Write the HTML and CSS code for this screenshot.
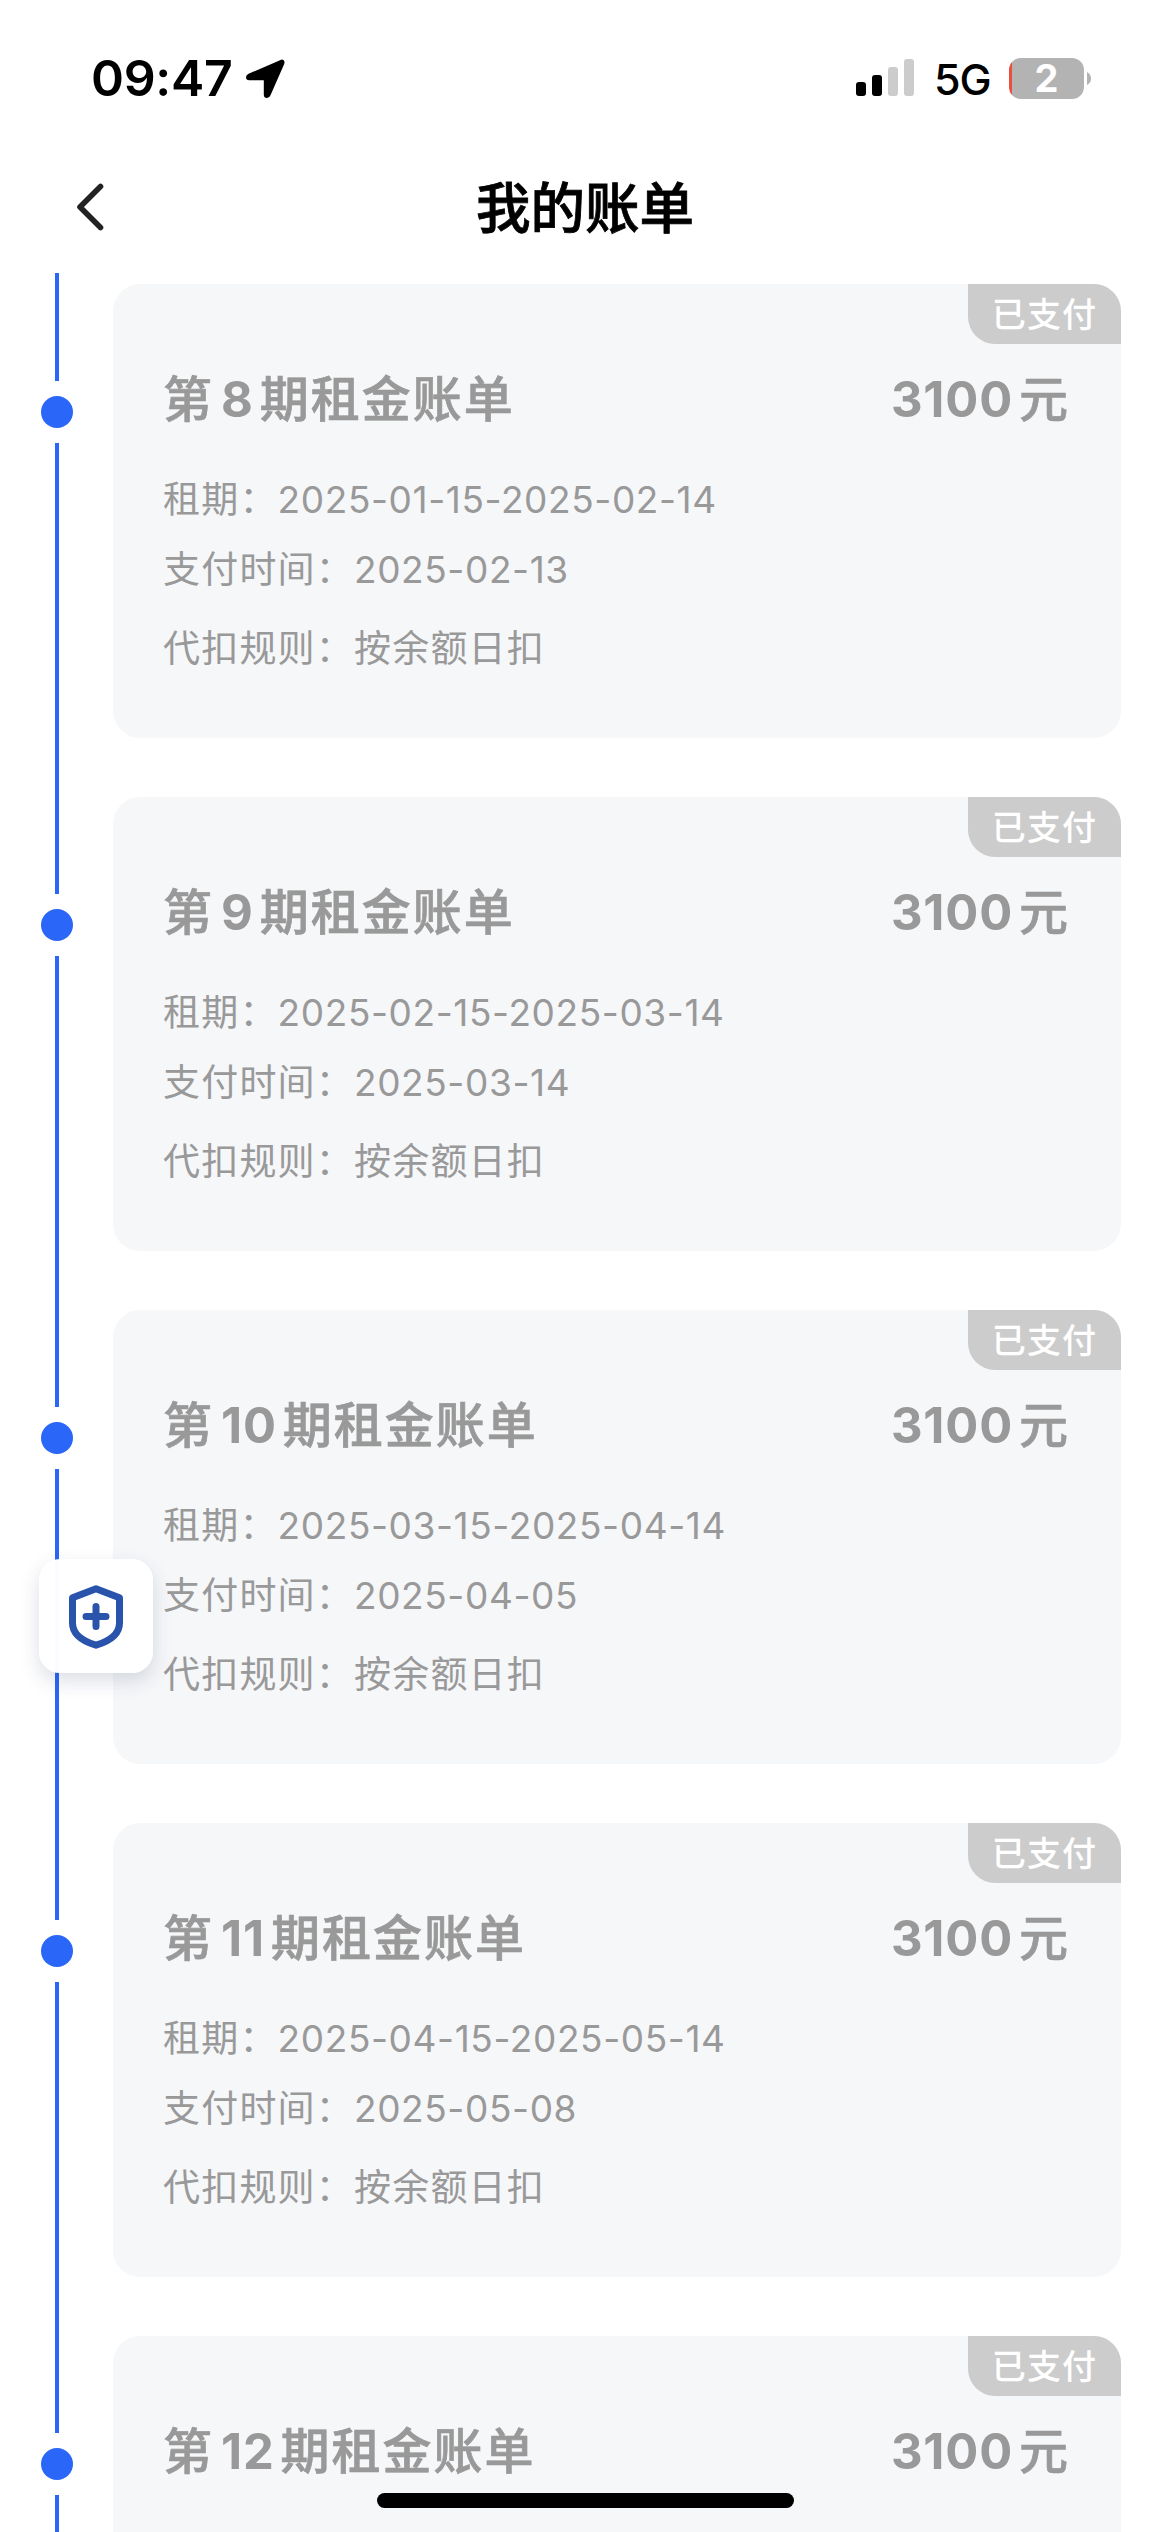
FILE: index.html
```html
<!DOCTYPE html>
<html lang="zh-CN">
<head>
    <meta charset="UTF-8">
    <meta name="viewport" content="width=device-width, initial-scale=1.0">
    <title>我的账单</title>
    <link rel="stylesheet" href="styles.css">
</head>
<body>
    <div class="status-bar">
        <span class="time">09:47</span>
        <svg class="location" width="39" height="39" viewBox="0 0 39 39">
            <path d="M34 1.2Q36.2 0 37.7 1.3Q39 2.6 38.2 5L24.5 36.2Q23.3 39 21 39Q17.8 39 17.8 35.5V21.2H3.3Q0 21.2 0 18.2Q0 16 2.6 14.8Z"/>
        </svg>
        <svg class="signal" width="58" height="38" viewBox="0 0 58 38">
            <rect x="0" y="23" width="10" height="14" rx="3"/>
            <rect x="16" y="16" width="10" height="21" rx="3"/>
            <rect x="32" y="8" width="10" height="29" rx="3" fill="#ccc"/>
            <rect x="48" y="0" width="10" height="37" rx="3" fill="#ccc"/>
        </svg>
        <span class="network">5G</span>
        <div class="battery">2</div>
        <svg class="battery-cap" width="4" height="13" viewBox="0 0 4 13">
            <path d="M0 0Q4 2 4 6.5Q4 11 0 13Z" fill="#b3b3b3"/>
        </svg>
    </div>

    <div class="navbar">
        <svg class="back" width="28" height="48" viewBox="0 0 28 48">
            <path d="M24.5 3.5L4 24L24.5 44.5" fill="none" stroke="#222" stroke-width="5.6" stroke-linecap="round" stroke-linejoin="round"/>
        </svg>
        <h1>我的账单</h1>
    </div>

    <div class="bill-list">
        <div class="bill">
            <div class="rail"><i class="line-top"></i><i class="dot"></i><i class="line-bottom"></i></div>
            <div class="card">
                <span class="badge">已支付</span>
                <div class="card-head">
                    <h2>第<b>8</b>期租金账单</h2>
                    <p class="amount"><b>3100</b>元</p>
                </div>
                <p>租期：<span>2025-01-15-2025-02-14</span></p>
                <p>支付时间：<span>2025-02-13</span></p>
                <p class="rule">代扣规则：按余额日扣</p>
            </div>
        </div>
        <div class="bill">
            <div class="rail"><i class="line-top"></i><i class="dot"></i><i class="line-bottom"></i></div>
            <div class="card">
                <span class="badge">已支付</span>
                <div class="card-head">
                    <h2>第<b>9</b>期租金账单</h2>
                    <p class="amount"><b>3100</b>元</p>
                </div>
                <p>租期：<span>2025-02-15-2025-03-14</span></p>
                <p>支付时间：<span>2025-03-14</span></p>
                <p class="rule">代扣规则：按余额日扣</p>
            </div>
        </div>
        <div class="bill">
            <div class="rail"><i class="line-top"></i><i class="dot"></i><i class="line-bottom"></i></div>
            <div class="card">
                <span class="badge">已支付</span>
                <div class="card-head">
                    <h2>第<b>10</b>期租金账单</h2>
                    <p class="amount"><b>3100</b>元</p>
                </div>
                <p>租期：<span>2025-03-15-2025-04-14</span></p>
                <p>支付时间：<span>2025-04-05</span></p>
                <p class="rule">代扣规则：按余额日扣</p>
            </div>
        </div>
        <div class="bill">
            <div class="rail"><i class="line-top"></i><i class="dot"></i><i class="line-bottom"></i></div>
            <div class="card">
                <span class="badge">已支付</span>
                <div class="card-head">
                    <h2>第<b>11</b>期租金账单</h2>
                    <p class="amount"><b>3100</b>元</p>
                </div>
                <p>租期：<span>2025-04-15-2025-05-14</span></p>
                <p>支付时间：<span>2025-05-08</span></p>
                <p class="rule">代扣规则：按余额日扣</p>
            </div>
        </div>
        <div class="bill">
            <div class="rail"><i class="line-top"></i><i class="dot"></i><i class="line-bottom"></i></div>
            <div class="card">
                <span class="badge">已支付</span>
                <div class="card-head">
                    <h2>第<b>12</b>期租金账单</h2>
                    <p class="amount"><b>3100</b>元</p>
                </div>
            </div>
        </div>
    </div>

    <div class="shield-button">
        <svg width="54" height="64" viewBox="0 0 54 64" fill="none" stroke="#2a54ab" stroke-width="7" stroke-linecap="round" stroke-linejoin="round">
            <path d="M27 3.8L50.5 12.7V38C50.5 49 41 56 27 60.2C13 56 3.5 49 3.5 38V12.7Z"/>
            <path d="M17 31.5H37M27 21.5V41.5"/>
        </svg>
    </div>
    <div class="home-indicator"></div>
</body>
</html>
```
FILE: styles.css
```css
* {
    box-sizing: border-box;
    margin: 0;
    padding: 0;
}
body {
    display: flex;
    flex-direction: column;
    height: 2532px;
    overflow: hidden;
    background-color: #fff;
    font-family: Inter, "Noto Sans CJK SC", sans-serif;
}
svg {
    display: block;
    flex: none;
}
.status-bar {
    display: flex;
    align-items: center;
    height: 141px;
    padding: 15px 79px 0 91px;
}
.time {
    width: 155px;
    font-size: 50px;
    font-weight: 600;
    letter-spacing: -0.3px;
}
.signal {
    margin-left: auto;
}
.network {
    width: 75px;
    margin: 2px 0 0 20px;
    font-size: 43px;
    font-weight: 500;
    letter-spacing: -1px;
}
.battery {
    width: 75px;
    height: 41px;
    border-radius: 12px;
    background: linear-gradient(to right, #eb4e3d 3px, #b3b3b3 3px);
    color: #fff;
    font-size: 38px;
    font-weight: 700;
    line-height: 41px;
    text-align: center;
}
.battery-cap {
    margin-left: 3px;
}
.navbar {
    display: grid;
    grid-template-columns: 1fr auto 1fr;
    align-items: center;
    height: 132px;
    padding: 0 76px;
}
.navbar h1 {
    padding-top: 3px;
    font-size: 54.5px;
    font-weight: 500;
    line-height: 129px;
    -webkit-text-stroke: 0.8px #000;
}
.bill-list {
    flex: 1;
    overflow: hidden;
}
.bill {
    display: flex;
    height: 513px;
}
.rail {
    display: flex;
    flex-direction: column;
    align-items: center;
    gap: 15px;
    width: 32px;
    margin: 0 40px 0 41px;
}
.line-top,
.line-bottom {
    width: 4px;
    background-color: #2a66f8;
}
.line-top {
    height: 108px;
}
.line-bottom {
    flex: 1;
}
.dot {
    width: 32px;
    height: 32px;
    border-radius: 50%;
    background-color: #2a66f8;
}
.card {
    position: relative;
    width: 1008px;
    height: 454px;
    margin-top: 11px;
    padding: 81px 51px 0 50px;
    border-radius: 27px;
    background-color: #f6f7f9;
    color: #999;
    font-size: 37px;
    line-height: 70px;
    letter-spacing: 1.2px;
}
.card p span {
    letter-spacing: 0.6px;
}
.badge {
    position: absolute;
    top: 0;
    right: 0;
    width: 153px;
    height: 60px;
    border-radius: 0 27px 0 27px;
    background-color: #ccc;
    color: #fff;
    font-size: 34px;
    font-weight: 500;
    line-height: 61px;
    text-align: center;
}
.card-head {
    display: flex;
    justify-content: space-between;
    margin-bottom: 30px;
    font-size: 49px;
    font-weight: 500;
    letter-spacing: 2px;
    -webkit-text-stroke: 0.7px #999;
}
.card-head h2 {
    font-size: 49px;
    font-weight: 500;
}
.card-head b {
    margin: 0 6px 0 7px;
    font-weight: 700;
    letter-spacing: 0.8px;
    -webkit-text-stroke: 0;
}
.rule {
    margin-top: 9px;
}
.shield-button {
    position: fixed;
    top: 1559px;
    left: 39px;
    display: flex;
    align-items: center;
    justify-content: center;
    width: 114px;
    height: 114px;
    padding-top: 2px;
    border-radius: 21px;
    background-color: rgba(255, 255, 255, 0.98);
    box-shadow: 0 8px 20px rgba(30, 50, 90, 0.16);
}
.home-indicator {
    position: fixed;
    bottom: 24px;
    left: 377px;
    width: 417px;
    height: 15px;
    border-radius: 8px;
    background-color: #000;
}
```
